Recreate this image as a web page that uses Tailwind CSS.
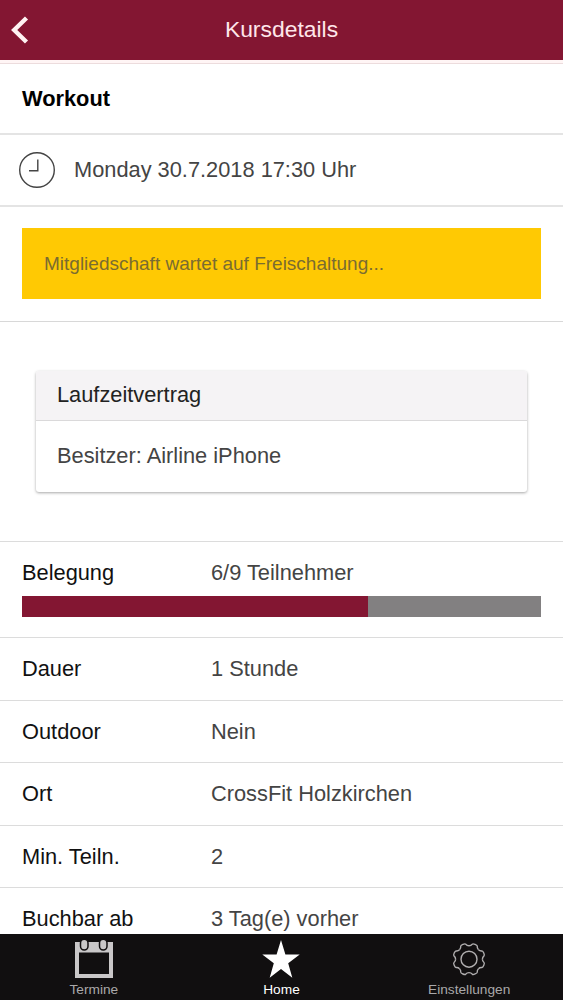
<!DOCTYPE html>
<html lang="de">
<head>
<meta charset="utf-8">
<title>Kursdetails</title>
<script src="https://cdn.jsdelivr.net/npm/@tailwindcss/browser@4"></script>
</head>
<body class="h-[1000px] w-[563px] overflow-hidden bg-white font-['Liberation_Sans',Arial,sans-serif] text-[21.8px] leading-[26px] text-[#444444]">
<div class="flex h-[1000px] flex-col">
  <header class="grid h-[60px] shrink-0 grid-cols-[60px_1fr_60px] items-center bg-[#831632]">
    <svg class="ml-[10px] h-[30px] w-5" viewBox="0 0 20 30" fill="none" stroke="#fff3f3" stroke-width="4.4"><path d="M16.5 3 4.2 15l12.3 12"/></svg>
    <h1 class="pb-0.5 text-center text-[22.9px] text-[#ffe6ea]">Kursdetails</h1>
  </header>
  <main class="min-h-0 flex-1 overflow-hidden">
    <div class="h-1 border-b border-[#ecdcdd] bg-[#fff5f5]"></div>
    <section class="flex h-[71px] items-center border-b-2 border-[#e4e4e4] px-[22px] font-bold text-black">Workout</section>
    <section class="flex h-[72px] items-center border-b-2 border-[#e4e4e4] pl-[18px]">
      <svg class="mr-[18px] size-[38px]" viewBox="0 0 38 38" fill="none" stroke="#444" stroke-width="1.4"><circle cx="19" cy="19" r="17.3"/><path d="M19.8 8.5v11.2H11"/></svg>
      <span>Monday 30.7.2018 17:30 Uhr</span>
    </section>
    <section class="h-[115px] border-b border-[#d8d8d8] px-[22px] pt-[21px]">
      <div class="flex h-[71px] items-center bg-[#ffc903] px-[22px] pt-px text-[19px] text-[#7a6c31]">Mitgliedschaft wartet auf Freischaltung...</div>
    </section>
    <section class="h-[220px] border-b border-[#dcdcdc] px-9 pt-[49px]">
      <div class="h-[121px] overflow-hidden rounded-[3px] bg-white shadow-[0_1px_3px_rgba(0,0,0,0.35)]">
        <div class="flex h-[50px] items-center border-b border-[#dad9da] bg-[#f5f3f5] px-[21px] pb-0.5 text-[#222222]">Laufzeitvertrag</div>
        <div class="flex h-[71px] items-center px-[21px] pb-0.5">Besitzer: Airline iPhone</div>
      </div>
    </section>
    <section class="h-24 border-b border-[#dcdcdc] px-[22px] pt-[18px]">
      <div class="grid grid-cols-[189px_1fr]"><span class="text-[#111111]">Belegung</span><span>6/9 Teilnehmer</span></div>
      <div class="mt-[10px] h-[21px] bg-[#828081]"><div class="h-[21px] bg-[#831632]" style="width:66.7%"></div></div>
    </section>
    <dl>
      <div class="grid h-[63px] grid-cols-[189px_1fr] items-center border-b border-[#dcdcdc] px-[22px]"><dt class="text-[#111111]">Dauer</dt><dd>1 Stunde</dd></div>
      <div class="grid h-[62px] grid-cols-[189px_1fr] items-center border-b border-[#dcdcdc] px-[22px]"><dt class="text-[#111111]">Outdoor</dt><dd>Nein</dd></div>
      <div class="grid h-[63px] grid-cols-[189px_1fr] items-center border-b border-[#dcdcdc] px-[22px]"><dt class="text-[#111111]">Ort</dt><dd>CrossFit Holzkirchen</dd></div>
      <div class="grid h-[62px] grid-cols-[189px_1fr] items-center border-b border-[#dcdcdc] px-[22px]"><dt class="text-[#111111]">Min. Teiln.</dt><dd>2</dd></div>
      <div class="grid h-[62px] grid-cols-[189px_1fr] items-center px-[22px] pb-px"><dt class="text-[#111111]">Buchbar ab</dt><dd>3 Tag(e) vorher</dd></div>
    </dl>
  </main>
  <nav class="grid h-[66px] shrink-0 grid-cols-3 bg-[#110f10] pt-[6px] text-[13.7px] leading-4 text-[#a9a8a9]">
    <div class="flex flex-col items-center">
      <svg class="h-[42px] w-11 overflow-visible" viewBox="0 0 44 42">
        <path fill="#c9c7c8" fill-rule="evenodd" d="M3 2h38v36H3zM7 12.5v21.5h30V12.5z"/>
        <g fill="#c9c7c8" stroke="#110f10" stroke-width="1.5"><rect x="8.5" y="-.7" width="7.5" height="10.700" rx="3.7"/><rect x="27.5" y="-.7" width="7.5" height="10.700" rx="3.7"/></g>
      </svg>
      <span>Termine</span>
    </div>
    <div class="flex flex-col items-center text-white">
      <svg class="h-[42px] w-11" viewBox="0 0 44 42" fill="#fff"><path d="m22 0 4.4 14.4h14.3L29.2 23.2l4.1 14.5L22 29.1 10.7 37.7l4.1-14.5L3.3 14.4h14.3z"/></svg>
      <span>Home</span>
    </div>
    <div class="flex flex-col items-center">
      <svg class="h-[42px] w-11" viewBox="0 0 44 42" fill="none" stroke="#b0aeaf" stroke-width="1.4">
        <defs><path id="tooth" d="M13.4 0C13.4 2 14.2 2.7 15 3.3C15.6 3.8 15.5 4.4 14.8 6.1C14.07 7.85 13.7 8.34 12.94 8.27C11.95 8.13 10.89 8.06 9.475 9.475"/></defs>
        <g transform="translate(22 19.2)">
          <circle r="8"/>
          <use href="#tooth"/><use href="#tooth" transform="rotate(45)"/><use href="#tooth" transform="rotate(90)"/><use href="#tooth" transform="rotate(135)"/><use href="#tooth" transform="rotate(180)"/><use href="#tooth" transform="rotate(225)"/><use href="#tooth" transform="rotate(270)"/><use href="#tooth" transform="rotate(315)"/>
        </g>
      </svg>
      <span>Einstellungen</span>
    </div>
  </nav>
</div>
</body>
</html>
